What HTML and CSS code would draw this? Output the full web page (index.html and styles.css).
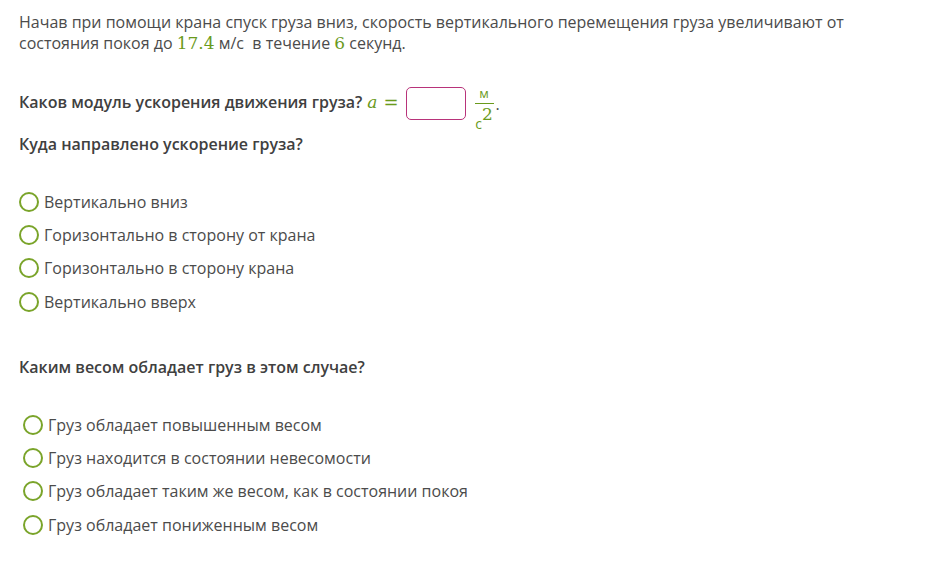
FILE: index.html
```html
<!DOCTYPE html>
<html lang="ru">
<head>
<meta charset="utf-8">
<link rel="stylesheet" href="styles.css">
</head>
<body>
<div class="task">
  <p class="intro">Начав при помощи крана спуск груза вниз, скорость вертикального перемещения груза увеличивают от состояния покоя до <span class="num">17.4</span> м/с&nbsp; в течение <span class="num">6</span> секунд.</p>

  <div class="q1">
    <span class="qtext">Каков модуль ускорения движения груза?</span>
    <span class="mvar">a</span><span class="meq">=</span>
    <span class="answer"></span>
    <span class="frac"><span class="fnum">м</span><span class="fden">с<span class="sup">2</span></span></span><span class="dot">.</span>
  </div>

  <div class="q2">Куда направлено ускорение груза?</div>
  <ul class="opts">
    <li><span class="radio"></span>Вертикально вниз</li>
    <li><span class="radio"></span>Горизонтально в сторону от крана</li>
    <li><span class="radio"></span>Горизонтально в сторону крана</li>
    <li><span class="radio"></span>Вертикально вверх</li>
  </ul>

  <div class="q3">Каким весом обладает груз в этом случае?</div>
  <ul class="opts opts2">
    <li><span class="radio"></span>Груз обладает повышенным весом</li>
    <li><span class="radio"></span>Груз находится в состоянии невесомости</li>
    <li><span class="radio"></span>Груз обладает таким же весом, как в состоянии покоя</li>
    <li><span class="radio"></span>Груз обладает пониженным весом</li>
  </ul>
</div>
</body>
</html>
```

FILE: styles.css
```css
body {
  margin: 0;
  background: #ffffff;
  font-family: "Open Sans", "Liberation Sans", sans-serif;
  font-size: 16px;
  color: #4b4b4b;
}
.task {
  padding: 12px 19px 0 19px;
}
.intro {
  margin: 0;
  line-height: 21px;
  width: 860px;
}
.num {
  font-family: "DejaVu Serif", "Liberation Serif", serif;
  font-size: 17px;
  line-height: 1;
  color: #6a9a1c;
}
.q1 {
  margin-top: 23px;
  display: flex;
  align-items: center;
  height: 50px;
}
.qtext, .q2, .q3 {
  font-weight: 600;
  color: #404040;
}
.mvar {
  font-family: "DejaVu Serif", "Liberation Serif", serif;
  font-style: italic;
  color: #6a9a1c;
  font-size: 17px;
  margin-left: 5px;
}
.meq {
  font-family: "DejaVu Serif", "Liberation Serif", serif;
  color: #6a9a1c;
  font-size: 18px;
  margin-left: 6px;
}
.answer {
  display: inline-block;
  box-sizing: border-box;
  width: 60px;
  height: 33px;
  border: 1.5px solid #b8337a;
  border-radius: 5px;
  margin-left: 7px;
  margin-top: 3px;
}
.frac {
  display: flex;
  flex-direction: column;
  align-items: center;
  margin-left: 9px;
  margin-top: 12px;
  color: #6a9a1c;
  width: 19px;
}
.fnum {
  box-sizing: border-box;
  font-size: 13px;
  line-height: 16px;
  height: 19px;
  padding-bottom: 5px;
  border-bottom: 1px solid #6a9a1c;
  width: 100%;
  text-align: center;
}
.fden {
  display: flex;
  align-items: flex-start;
  box-sizing: border-box;
  height: 28px;
  font-size: 14px;
  line-height: 14px;
  padding-top: 13px;
}
.sup {
  font-family: "DejaVu Serif", "Liberation Serif", serif;
  font-size: 17px;
  line-height: 15px;
  margin-top: -10px;
}
.dot {
  margin-left: 2px;
  margin-top: 4px;
}
.q2 {
  margin-top: 6px;
  line-height: 22px;
}
.opts {
  list-style: none;
  margin: 30px 0 0 0;
  padding: 0;
}
.opts li {
  display: flex;
  align-items: center;
  height: 33.3px;
}
.radio {
  display: inline-block;
  box-sizing: border-box;
  width: 20px;
  height: 20px;
  border: 2.5px solid #7aa42a;
  border-radius: 50%;
  margin-right: 5px;
}
.q3 {
  margin-top: 38px;
  line-height: 22px;
}
.opts2 {
  margin-top: 30px;
  padding-left: 4px;
}
```
